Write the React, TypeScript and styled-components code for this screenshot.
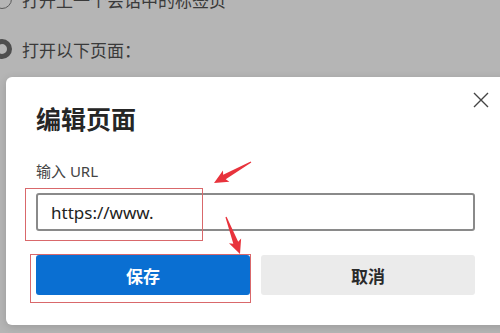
import styled, { createGlobalStyle } from "styled-components";

const GlobalStyle = createGlobalStyle`
  html, body {
    margin: 0;
    padding: 0;
    background: #b5b5b5;
  }
  * {
    box-sizing: border-box;
  }
`;

const Page = styled.div`
  position: relative;
  width: 500px;
  height: 333px;
  overflow: hidden;
  background: #b5b5b5;
  font-family: "Noto Sans", "Noto Sans CJK SC", sans-serif;
  color: #3a3a3a;
`;

const Settings = styled.div`
  display: flex;
  flex-direction: column;
  margin-top: -16px;
`;

const Option = styled.div`
  display: flex;
  align-items: center;
  gap: 10px;
  height: 30px;
  margin-left: -8px;
  margin-bottom: 20px;
  font-size: 17px;
`;

const Radio = styled.span<{ checked?: boolean }>`
  width: 20px;
  height: 20px;
  border-radius: 50%;
  border: ${(p) => (p.checked ? "5px solid #4e4e4e" : "1.5px solid #5a5a5a")};
  flex-shrink: 0;
`;

const SectionTitle = styled.h2`
  margin: 250px 0 0 10px;
  font-size: 26px;
  font-weight: 700;
  color: #303030;
  line-height: 1;
`;

const Dialog = styled.div`
  position: absolute;
  left: 6px;
  top: 77px;
  width: 540px;
  height: 248px;
  background: #fff;
  border-radius: 6px;
  box-shadow: 0 2px 8px rgba(0, 0, 0, 0.15);
  padding: 25px 0 0 30px;
`;

const Title = styled.h1`
  margin: 0;
  font-size: 25px;
  font-weight: 700;
  color: #262626;
  line-height: 34px;
`;

const CloseButton = styled.button`
  position: absolute;
  left: 465px;
  top: 13px;
  width: 19px;
  height: 19px;
  padding: 0;
  border: none;
  background: transparent;
  display: flex;
  align-items: center;
  justify-content: center;
`;

const Label = styled.div`
  margin-top: 25px;
  font-size: 15px;
  color: #444;
  line-height: 20px;
`;

const UrlInput = styled.div`
  margin-top: 12px;
  width: 439px;
  height: 38px;
  border: 2px solid #8a8a8a;
  border-radius: 3px;
  display: flex;
  align-items: center;
  padding-left: 13px;
  font-size: 17px;
  color: #222;
`;

const Actions = styled.div`
  display: flex;
  gap: 11px;
  margin-top: 24px;
  width: 439px;
`;

const Button = styled.button<{ primary?: boolean }>`
  flex: 1;
  height: 40px;
  border: none;
  border-radius: 3px;
  font-family: "Noto Sans CJK SC", sans-serif;
  font-size: 17px;
  font-weight: 700;
  background: ${(p) => (p.primary ? "#0a6fd2" : "#ebebeb")};
  color: ${(p) => (p.primary ? "#fff" : "#2a2a2a")};
`;

const Mark = styled.div`
  position: absolute;
  border: 1px solid #d9686b;
  pointer-events: none;
`;

const Arrows = styled.svg`
  position: absolute;
  left: 0;
  top: 0;
  pointer-events: none;
`;

function Arrow({ x1, y1, x2, y2 }: { x1: number; y1: number; x2: number; y2: number }) {
  const dx = x2 - x1;
  const dy = y2 - y1;
  const len = Math.sqrt(dx * dx + dy * dy);
  const angle = (Math.atan2(dy, dx) * 180) / Math.PI;
  const h = 14;
  const pts = [
    [0, -0.6],
    [len - h + 2, -2.6],
    [len - h, -6.5],
    [len, 0],
    [len - h, 6.5],
    [len - h + 2, 2.6],
    [0, 0.6],
  ]
    .map((p) => p.join(","))
    .join(" ");
  return (
    <polygon
      points={pts}
      fill="#e8333c"
      transform={`translate(${x1} ${y1}) rotate(${angle})`}
    />
  );
}

export default function App() {
  return (
    <Page>
      <GlobalStyle />
      <Settings>
        <Option>
          <Radio />
          打开上一个会话中的标签页
        </Option>
        <Option>
          <Radio checked />
          打开以下页面：
        </Option>
        <SectionTitle>“开始”按钮</SectionTitle>
      </Settings>

      <Dialog>
        <Title>编辑页面</Title>
        <CloseButton aria-label="关闭">
          <svg width="16" height="16" viewBox="0 0 16 16">
            <path d="M1 1 L15 15 M15 1 L1 15" stroke="#444" strokeWidth="1.4" />
          </svg>
        </CloseButton>
        <Label>输入 URL</Label>
        <UrlInput>https://www.</UrlInput>
        <Actions>
          <Button primary>保存</Button>
          <Button>取消</Button>
        </Actions>
      </Dialog>

      <Mark style={{ left: 25, top: 188, width: 178, height: 53 }} />
      <Mark style={{ left: 30, top: 254, width: 221, height: 49 }} />
      <Arrows width="500" height="333">
        <Arrow x1={251} y1={162} x2={214} y2={183} />
        <Arrow x1={226} y1={217} x2={240} y2={254} />
      </Arrows>
    </Page>
  );
}
